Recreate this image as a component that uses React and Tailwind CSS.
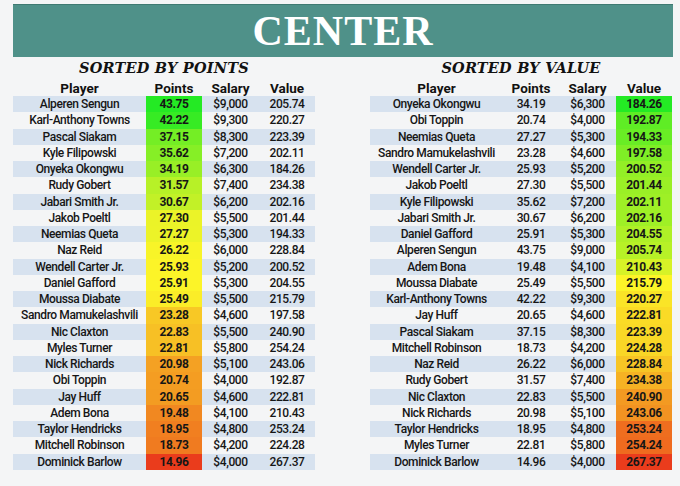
import React from 'react';

const byPoints = [
  ['Alperen Sengun', 43.75, '$9,000', 205.74],
  ['Karl-Anthony Towns', 42.22, '$9,300', 220.27],
  ['Pascal Siakam', 37.15, '$8,300', 223.39],
  ['Kyle Filipowski', 35.62, '$7,200', 202.11],
  ['Onyeka Okongwu', 34.19, '$6,300', 184.26],
  ['Rudy Gobert', 31.57, '$7,400', 234.38],
  ['Jabari Smith Jr.', 30.67, '$6,200', 202.16],
  ['Jakob Poeltl', 27.3, '$5,500', 201.44],
  ['Neemias Queta', 27.27, '$5,300', 194.33],
  ['Naz Reid', 26.22, '$6,000', 228.84],
  ['Wendell Carter Jr.', 25.93, '$5,200', 200.52],
  ['Daniel Gafford', 25.91, '$5,300', 204.55],
  ['Moussa Diabate', 25.49, '$5,500', 215.79],
  ['Sandro Mamukelashvili', 23.28, '$4,600', 197.58],
  ['Nic Claxton', 22.83, '$5,500', 240.9],
  ['Myles Turner', 22.81, '$5,800', 254.24],
  ['Nick Richards', 20.98, '$5,100', 243.06],
  ['Obi Toppin', 20.74, '$4,000', 192.87],
  ['Jay Huff', 20.65, '$4,600', 222.81],
  ['Adem Bona', 19.48, '$4,100', 210.43],
  ['Taylor Hendricks', 18.95, '$4,800', 253.24],
  ['Mitchell Robinson', 18.73, '$4,200', 224.28],
  ['Dominick Barlow', 14.96, '$4,000', 267.37],
];

const byValue = [...byPoints].sort((a, b) => a[3] - b[3]);

const RED = [234, 60, 28];
const YELLOW = [252, 244, 40];
const GREEN = [36, 234, 36];

// 3-colour scale, median as the midpoint (like Excel's conditional format)
function scale(values, highIsGood) {
  const sorted = [...values].sort((a, b) => a - b);
  const min = sorted[0];
  const max = sorted[sorted.length - 1];
  const mid = sorted[Math.floor(sorted.length / 2)];
  const lo = highIsGood ? RED : GREEN;
  const hi = highIsGood ? GREEN : RED;
  return (v) => {
    let a, b, t;
    if (v <= mid) {
      a = lo; b = YELLOW; t = (v - min) / (mid - min);
    } else {
      a = YELLOW; b = hi; t = (v - mid) / (max - mid);
    }
    const c = a.map((x, i) => Math.round(x + (b[i] - x) * t));
    return `rgb(${c[0]}, ${c[1]}, ${c[2]})`;
  };
}

const pointsColor = scale(byPoints.map((r) => r[1]), true);
const valueColor = scale(byPoints.map((r) => r[3]), false);

function Table({ title, rows, highlight }) {
  return (
    <div className="w-[302px]">
      <div
        className="h-[21px] flex items-center justify-center font-bold italic text-[#111] tracking-[0.2px]"
        style={{ fontFamily: '"DejaVu Serif", "Liberation Serif", serif' }}
      >
        <span className="text-[14.5px]">{title}</span>
      </div>
      <div className="grid grid-cols-[133px_56px_57px_56px] h-[18px] items-center text-center text-[13.5px] font-bold text-[#111]">
        <div>Player</div>
        <div>Points</div>
        <div>Salary</div>
        <div>Value</div>
      </div>
      {rows.map((r, i) => (
        <div
          key={r[0]}
          className={`grid grid-cols-[133px_56px_57px_56px] h-[16.25px] items-center text-center text-[12px] font-medium text-[#161616] tracking-[-0.4px] ${i % 2 === 0 ? 'bg-[#d7e2ef]' : ''}`}
        >
          <div className="leading-none">{r[0]}</div>
          {highlight === 'points' ? (
            <div
              className="h-full flex items-center justify-center font-bold leading-none"
              style={{ backgroundColor: pointsColor(r[1]) }}
            >
              {r[1].toFixed(2)}
            </div>
          ) : (
            <div className="leading-none">{r[1].toFixed(2)}</div>
          )}
          <div className="leading-none">{r[2]}</div>
          {highlight === 'value' ? (
            <div
              className="h-full flex items-center justify-center font-bold leading-none"
              style={{ backgroundColor: valueColor(r[3]) }}
            >
              {r[3].toFixed(2)}
            </div>
          ) : (
            <div className="leading-none">{r[3].toFixed(2)}</div>
          )}
        </div>
      ))}
    </div>
  );
}

export default function App() {
  return (
    <div
      className="w-[680px] h-[486px] bg-[#f4f5f6] pt-[4px] pl-[13px] pr-[7px] overflow-hidden"
      style={{ fontFamily: 'Roboto, "Liberation Sans", sans-serif' }}
    >
      <div className="h-[53px] bg-[#4f9189] border-t border-[#3f7a72] flex items-center justify-center">
        <h1
          className="text-white text-[42px] font-bold tracking-[1px] leading-none"
          style={{ fontFamily: '"Liberation Serif", "DejaVu Serif", serif' }}
        >
          CENTER
        </h1>
      </div>
      <div className="flex gap-[55px]">
        <Table title="SORTED BY POINTS" rows={byPoints} highlight="points" />
        <Table title="SORTED BY VALUE" rows={byValue} highlight="value" />
      </div>
    </div>
  );
}
